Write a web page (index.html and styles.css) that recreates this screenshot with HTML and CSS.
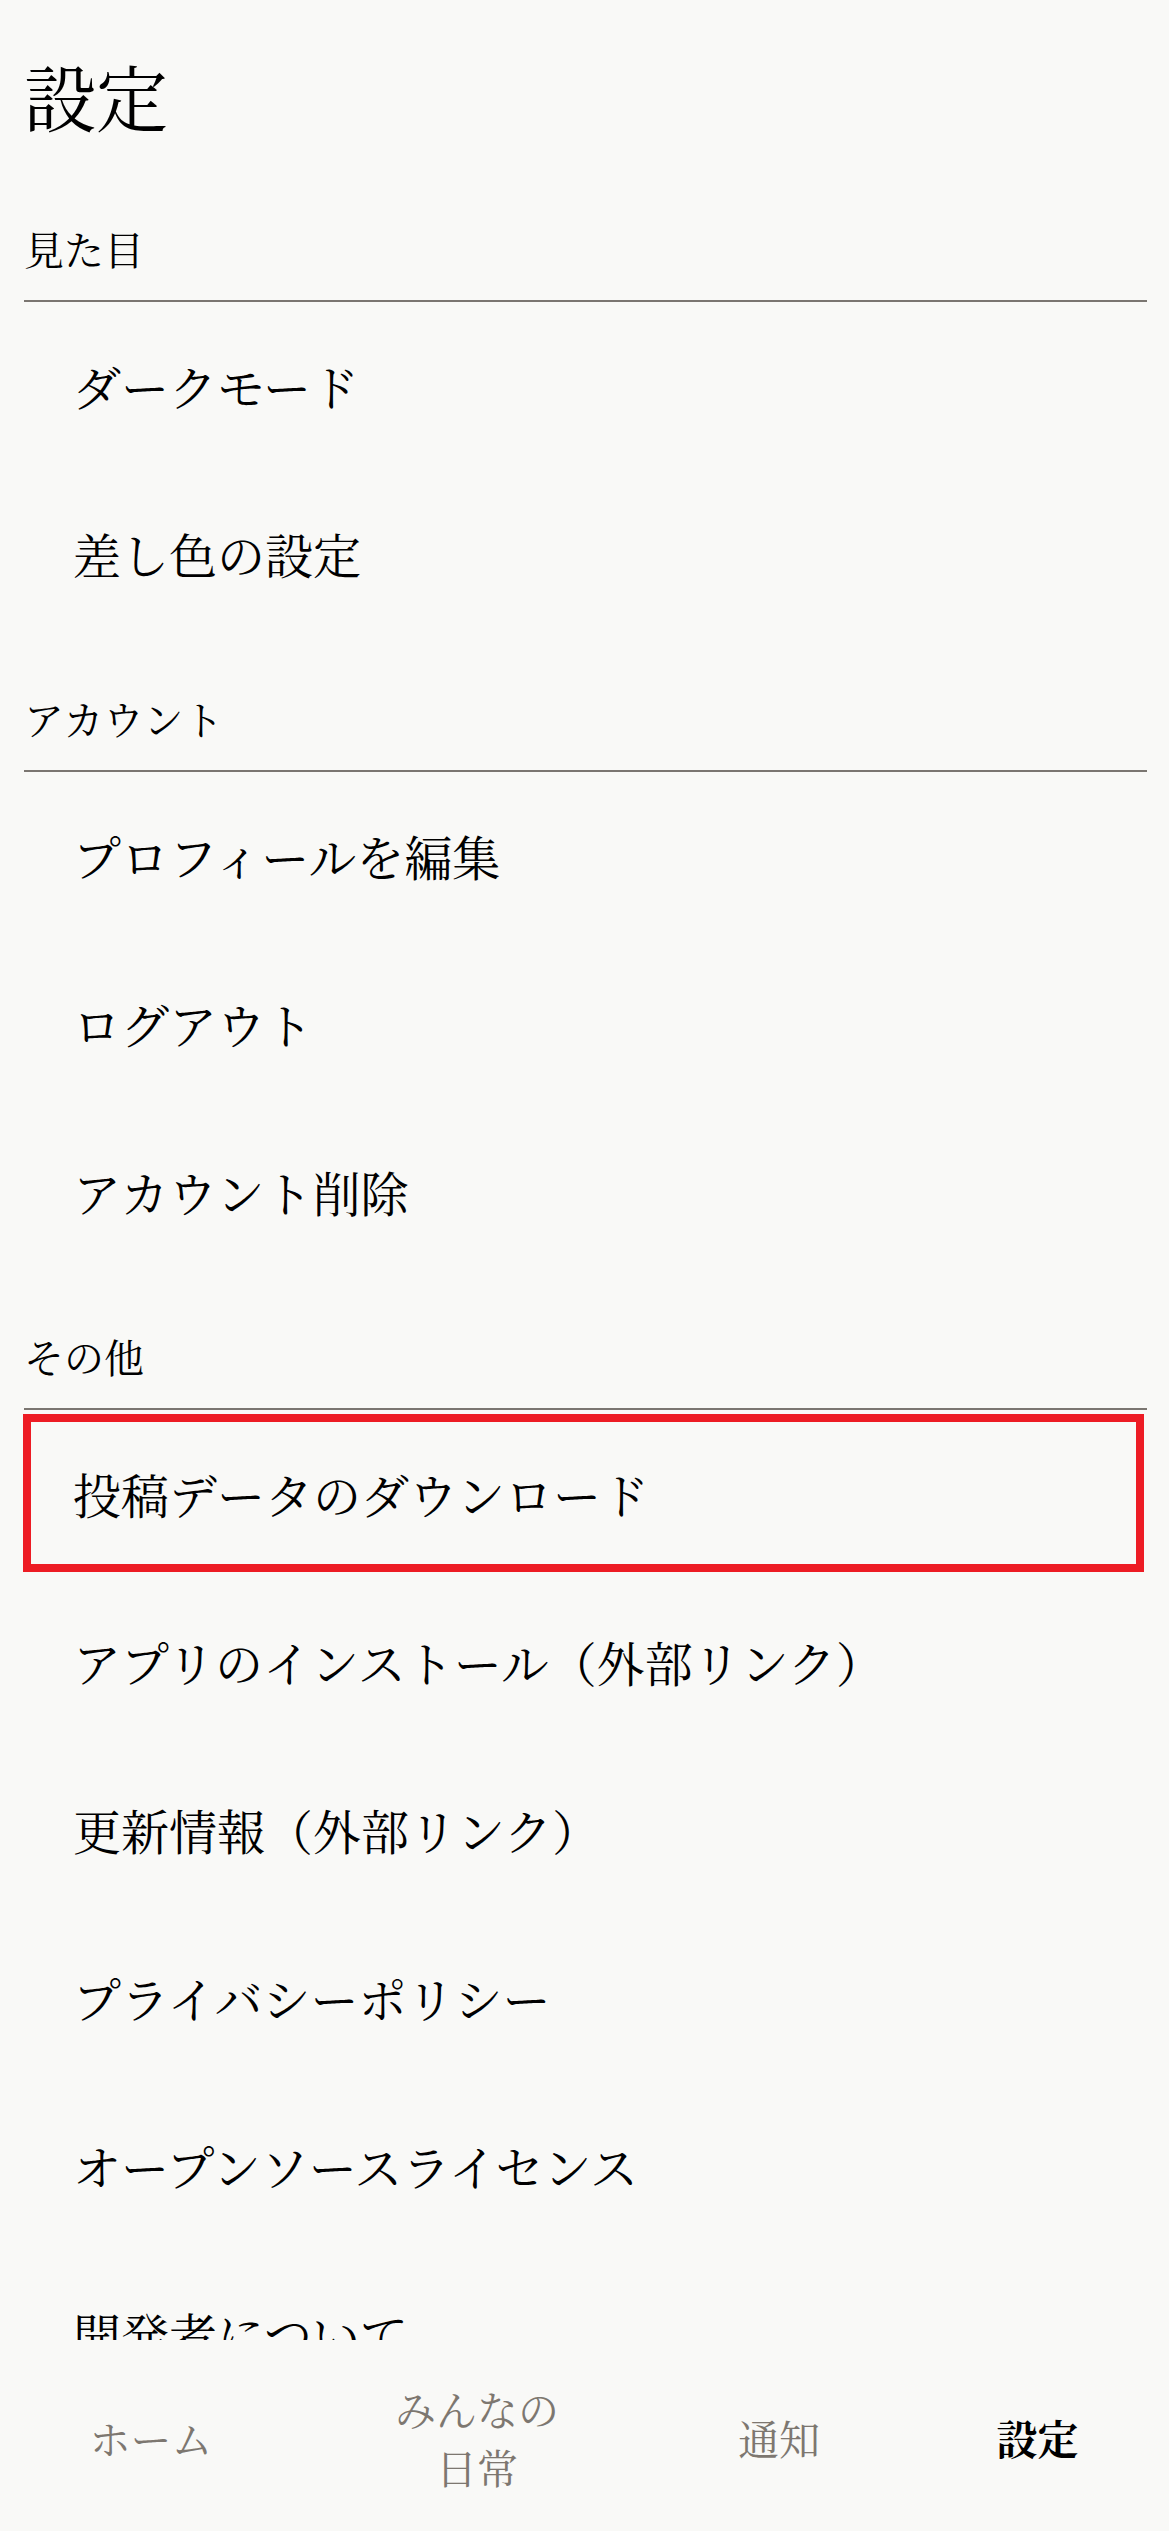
FILE: index.html
```html
<!DOCTYPE html>
<html lang="ja">
<head>
<meta charset="utf-8">
<title>設定</title>
<link rel="stylesheet" href="styles.css">
</head>
<body>
<main class="page">
  <h1 class="title">設定</h1>

  <section class="group">
    <h2 class="group-head">見た目</h2>
    <ul class="list">
      <li class="item">ダークモード</li>
      <li class="item">差し色の設定</li>
    </ul>
  </section>

  <section class="group">
    <h2 class="group-head">アカウント</h2>
    <ul class="list">
      <li class="item">プロフィールを編集</li>
      <li class="item">ログアウト</li>
      <li class="item">アカウント削除</li>
    </ul>
  </section>

  <section class="group">
    <h2 class="group-head">その他</h2>
    <ul class="list">
      <li class="item item-marked">投稿データのダウンロード</li>
      <li class="item">アプリのインストール（外部リンク）</li>
      <li class="item">更新情報（外部リンク）</li>
      <li class="item">プライバシーポリシー</li>
      <li class="item">オープンソースライセンス</li>
      <li class="item">開発者について</li>
    </ul>
  </section>
</main>

<nav class="tabbar">
  <a class="tab">ホーム</a>
  <a class="tab"><span class="tab-wrap">みんなの日常</span></a>
  <a class="tab">通知</a>
  <a class="tab tab-active">設定</a>
</nav>
</body>
</html>
```

FILE: styles.css
```css
* {
  box-sizing: border-box;
}

html,
body {
  margin: 0;
  padding: 0;
  background: #f9f9f7;
}

body {
  font-family: "Noto Serif CJK JP", "Noto Sans CJK JP", serif;
  color: #000;
  overflow: hidden;
}

.page {
  padding: 0 22px 220px 24px;
}

.title {
  margin: 0;
  padding: 45px 0 23px;
  font-size: 72px;
  font-weight: 400;
  line-height: 100px;
}

.group-head {
  margin: 0;
  padding: 50px 0 22px;
  font-size: 40px;
  font-weight: 400;
  line-height: 60px;
  border-bottom: 2px solid #7b7671;
}

.list {
  list-style: none;
  margin: 0;
  padding: 0;
}

.item {
  position: relative;
  height: 168px;
  padding: 48px 0 48px 49px;
  font-size: 48px;
  line-height: 72px;
  white-space: nowrap;
}

.item-marked::after {
  content: "";
  position: absolute;
  left: -1px;
  right: 3px;
  top: 4px;
  bottom: 6px;
  border: 8px solid #ed1c24;
}

.tabbar {
  position: fixed;
  left: 0;
  right: 0;
  bottom: 0;
  height: 191px;
  padding-top: 5px;
  background: #f9f9f7;
  display: grid;
  grid-template-columns: 302px 350px 254px 1fr;
  align-items: center;
  justify-items: center;
  font-size: 41px;
  color: #7d7770;
}

.tab {
  text-align: center;
  line-height: 58px;
}

.tab-wrap {
  display: block;
  width: 4.2em;
}

.tab-active {
  color: #000;
  font-weight: 700;
}
```
